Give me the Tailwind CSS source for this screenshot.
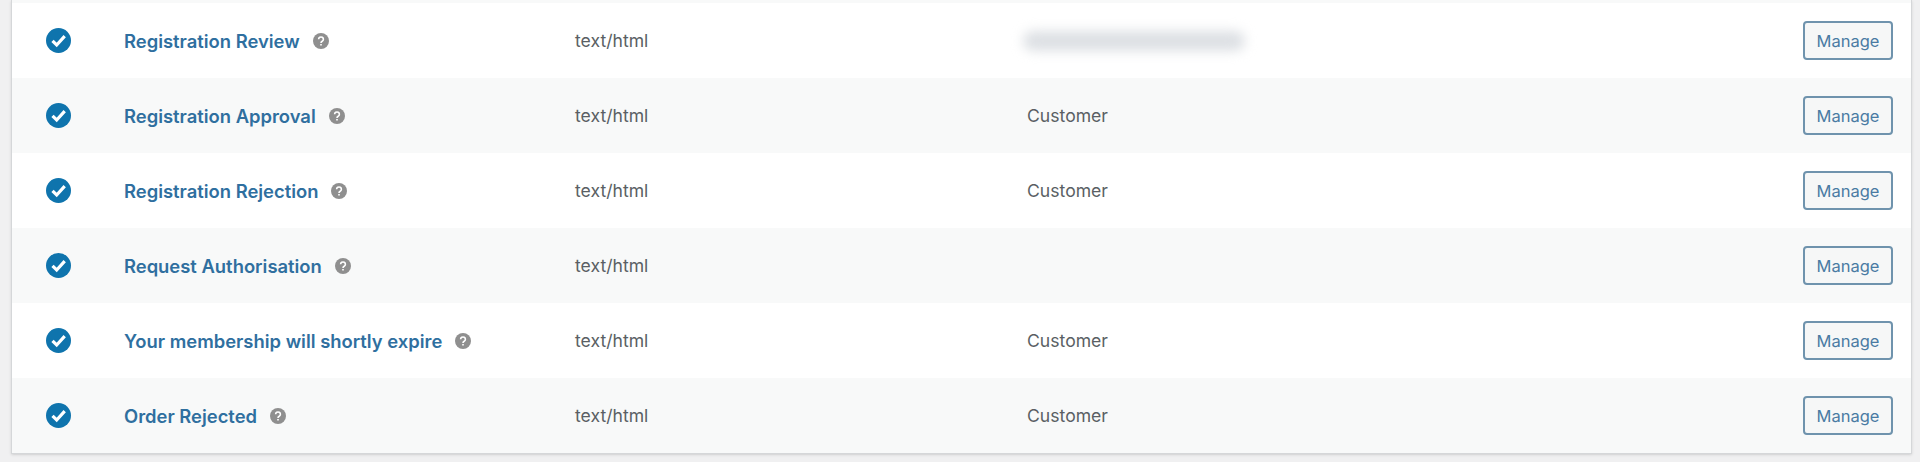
<!DOCTYPE html>
<html lang="en">
<head>
    <meta charset="UTF-8">
    <meta name="viewport" content="width=device-width, initial-scale=1.0">
    <title>Emails</title>
    <script src="https://cdn.jsdelivr.net/npm/@tailwindcss/browser@4"></script>
</head>
<body class="h-[462px] overflow-hidden bg-[#f0f0f1] font-['Inter',sans-serif] text-[17.6px] text-[#5a5f64]">
    <div class="ml-[11px] mr-[8px] border-x border-b border-[#d5d7d9] shadow-sm">
        <div class="h-[3px] bg-[#f8f9f9]"></div>

        <!-- Registration Review -->
        <div class="grid h-[75px] grid-cols-[112px_451px_452px_1fr] items-center bg-white">
            <svg class="ml-[34px] h-[25px] w-[25px]" viewBox="0 0 25 25"><circle cx="12.5" cy="12.5" r="12.5" fill="#0f74ad"/><path d="M6.5 12.8l4.2 4.2 8-8.8" fill="none" stroke="#fff" stroke-width="3.2"/></svg>
            <div class="flex items-center gap-[13px] pt-[2px]">
                <a href="#" class="text-[18.4px] font-semibold text-[#2f6f9f]">Registration Review</a>
                <svg class="h-4 w-4" viewBox="0 0 16 16"><circle cx="8" cy="8" r="8" fill="#8f8f8f"/><path d="M5.6 6.3a2.4 2.3 0 1 1 3.6 2c-.8.5-1.2.8-1.2 1.6M8 11v1.6" fill="none" stroke="#fff" stroke-width="1.6"/></svg>
            </div>
            <span class="pt-[2px]">text/html</span>
            <div class="flex items-center justify-between">
                <div class="-ml-[4px] h-[20px] w-[222px] rounded-full bg-[#dde0e4] blur-[6px]"></div>
                <button class="mr-[18px] h-[39px] w-[90px] rounded-[4px] border-2 border-[#6f93ad] bg-[#f6f7f7] pt-[1px] text-[16.5px] text-[#4a7ba3]">Manage</button>
            </div>
        </div>

        <!-- Registration Approval -->
        <div class="grid h-[75px] grid-cols-[112px_451px_452px_1fr] items-center bg-[#f8f9f9]">
            <svg class="ml-[34px] h-[25px] w-[25px]" viewBox="0 0 25 25"><circle cx="12.5" cy="12.5" r="12.5" fill="#0f74ad"/><path d="M6.5 12.8l4.2 4.2 8-8.8" fill="none" stroke="#fff" stroke-width="3.2"/></svg>
            <div class="flex items-center gap-[13px] pt-[2px]">
                <a href="#" class="text-[18.4px] font-semibold text-[#2f6f9f]">Registration Approval</a>
                <svg class="h-4 w-4" viewBox="0 0 16 16"><circle cx="8" cy="8" r="8" fill="#8f8f8f"/><path d="M5.6 6.3a2.4 2.3 0 1 1 3.6 2c-.8.5-1.2.8-1.2 1.6M8 11v1.6" fill="none" stroke="#fff" stroke-width="1.6"/></svg>
            </div>
            <span class="pt-[2px]">text/html</span>
            <div class="flex items-center justify-between">
                <span class="pt-[2px]">Customer</span>
                <button class="mr-[18px] h-[39px] w-[90px] rounded-[4px] border-2 border-[#6f93ad] bg-[#f6f7f7] pt-[1px] text-[16.5px] text-[#4a7ba3]">Manage</button>
            </div>
        </div>

        <!-- Registration Rejection -->
        <div class="grid h-[75px] grid-cols-[112px_451px_452px_1fr] items-center bg-white">
            <svg class="ml-[34px] h-[25px] w-[25px]" viewBox="0 0 25 25"><circle cx="12.5" cy="12.5" r="12.5" fill="#0f74ad"/><path d="M6.5 12.8l4.2 4.2 8-8.8" fill="none" stroke="#fff" stroke-width="3.2"/></svg>
            <div class="flex items-center gap-[13px] pt-[2px]">
                <a href="#" class="text-[18.4px] font-semibold text-[#2f6f9f]">Registration Rejection</a>
                <svg class="h-4 w-4" viewBox="0 0 16 16"><circle cx="8" cy="8" r="8" fill="#8f8f8f"/><path d="M5.6 6.3a2.4 2.3 0 1 1 3.6 2c-.8.5-1.2.8-1.2 1.6M8 11v1.6" fill="none" stroke="#fff" stroke-width="1.6"/></svg>
            </div>
            <span class="pt-[2px]">text/html</span>
            <div class="flex items-center justify-between">
                <span class="pt-[2px]">Customer</span>
                <button class="mr-[18px] h-[39px] w-[90px] rounded-[4px] border-2 border-[#6f93ad] bg-[#f6f7f7] pt-[1px] text-[16.5px] text-[#4a7ba3]">Manage</button>
            </div>
        </div>

        <!-- Request Authorisation -->
        <div class="grid h-[75px] grid-cols-[112px_451px_452px_1fr] items-center bg-[#f8f9f9]">
            <svg class="ml-[34px] h-[25px] w-[25px]" viewBox="0 0 25 25"><circle cx="12.5" cy="12.5" r="12.5" fill="#0f74ad"/><path d="M6.5 12.8l4.2 4.2 8-8.8" fill="none" stroke="#fff" stroke-width="3.2"/></svg>
            <div class="flex items-center gap-[13px] pt-[2px]">
                <a href="#" class="text-[18.4px] font-semibold text-[#2f6f9f]">Request Authorisation</a>
                <svg class="h-4 w-4" viewBox="0 0 16 16"><circle cx="8" cy="8" r="8" fill="#8f8f8f"/><path d="M5.6 6.3a2.4 2.3 0 1 1 3.6 2c-.8.5-1.2.8-1.2 1.6M8 11v1.6" fill="none" stroke="#fff" stroke-width="1.6"/></svg>
            </div>
            <span class="pt-[2px]">text/html</span>
            <div class="flex items-center justify-end">
                <button class="mr-[18px] h-[39px] w-[90px] rounded-[4px] border-2 border-[#6f93ad] bg-[#f6f7f7] pt-[1px] text-[16.5px] text-[#4a7ba3]">Manage</button>
            </div>
        </div>

        <!-- Your membership will shortly expire -->
        <div class="grid h-[75px] grid-cols-[112px_451px_452px_1fr] items-center bg-white">
            <svg class="ml-[34px] h-[25px] w-[25px]" viewBox="0 0 25 25"><circle cx="12.5" cy="12.5" r="12.5" fill="#0f74ad"/><path d="M6.5 12.8l4.2 4.2 8-8.8" fill="none" stroke="#fff" stroke-width="3.2"/></svg>
            <div class="flex items-center gap-[13px] pt-[2px]">
                <a href="#" class="text-[18.4px] font-semibold text-[#2f6f9f]">Your membership will shortly expire</a>
                <svg class="h-4 w-4" viewBox="0 0 16 16"><circle cx="8" cy="8" r="8" fill="#8f8f8f"/><path d="M5.6 6.3a2.4 2.3 0 1 1 3.6 2c-.8.5-1.2.8-1.2 1.6M8 11v1.6" fill="none" stroke="#fff" stroke-width="1.6"/></svg>
            </div>
            <span class="pt-[2px]">text/html</span>
            <div class="flex items-center justify-between">
                <span class="pt-[2px]">Customer</span>
                <button class="mr-[18px] h-[39px] w-[90px] rounded-[4px] border-2 border-[#6f93ad] bg-[#f6f7f7] pt-[1px] text-[16.5px] text-[#4a7ba3]">Manage</button>
            </div>
        </div>

        <!-- Order Rejected -->
        <div class="grid h-[75px] grid-cols-[112px_451px_452px_1fr] items-center bg-[#f8f9f9]">
            <svg class="ml-[34px] h-[25px] w-[25px]" viewBox="0 0 25 25"><circle cx="12.5" cy="12.5" r="12.5" fill="#0f74ad"/><path d="M6.5 12.8l4.2 4.2 8-8.8" fill="none" stroke="#fff" stroke-width="3.2"/></svg>
            <div class="flex items-center gap-[13px] pt-[2px]">
                <a href="#" class="text-[18.4px] font-semibold text-[#2f6f9f]">Order Rejected</a>
                <svg class="h-4 w-4" viewBox="0 0 16 16"><circle cx="8" cy="8" r="8" fill="#8f8f8f"/><path d="M5.6 6.3a2.4 2.3 0 1 1 3.6 2c-.8.5-1.2.8-1.2 1.6M8 11v1.6" fill="none" stroke="#fff" stroke-width="1.6"/></svg>
            </div>
            <span class="pt-[2px]">text/html</span>
            <div class="flex items-center justify-between">
                <span class="pt-[2px]">Customer</span>
                <button class="mr-[18px] h-[39px] w-[90px] rounded-[4px] border-2 border-[#6f93ad] bg-[#f6f7f7] pt-[1px] text-[16.5px] text-[#4a7ba3]">Manage</button>
            </div>
        </div>
    </div>
</body>
</html>
